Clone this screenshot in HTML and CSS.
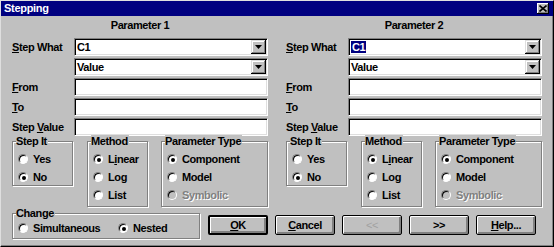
FILE: index.html
```html
<!DOCTYPE html>
<html>
<head>
<meta charset="utf-8">
<link rel="stylesheet" href="styles.css">
</head>
<body>
<div class="window">
  <div class="titlebar">
    <span class="title">Stepping</span>
    <span class="close"><svg width="8" height="7" viewBox="0 0 8 7"><path d="M0.5 0.5 L7.5 6.5 M7.5 0.5 L0.5 6.5" stroke="#000" stroke-width="1.6"/></svg></span>
  </div>
  <div class="content">
    <div class="columns">
      <div class="param">
        <div class="heading">Parameter 1</div>
        <div class="row"><span class="lbl"><u>S</u>tep What</span><div class="combo"><span class="combo-text">C1</span><span class="combo-btn"><svg width="7" height="4" viewBox="0 0 7 4"><path d="M0 0 H7 L3.5 4 Z" fill="#000"/></svg></span></div></div>
        <div class="row"><span class="lbl"></span><div class="combo"><span class="combo-text">Value</span><span class="combo-btn"><svg width="7" height="4" viewBox="0 0 7 4"><path d="M0 0 H7 L3.5 4 Z" fill="#000"/></svg></span></div></div>
        <div class="row"><span class="lbl"><u>F</u>rom</span><div class="edit"></div></div>
        <div class="row"><span class="lbl"><u>T</u>o</span><div class="edit"></div></div>
        <div class="row"><span class="lbl">Step <u>V</u>alue</span><div class="edit"></div></div>
        <div class="groups">
          <div class="group g-stepit"><span class="group-title">Step It</span>
            <div class="radio-row"><span class="radio"></span><span>Yes</span></div>
            <div class="radio-row"><span class="radio on"></span><span>No</span></div>
          </div>
          <div class="group g-method"><span class="group-title">Method</span>
            <div class="radio-row"><span class="radio on"></span><span>L<u>i</u>near</span></div>
            <div class="radio-row"><span class="radio"></span><span>Lo<u>g</u></span></div>
            <div class="radio-row"><span class="radio"></span><span>List</span></div>
          </div>
          <div class="group g-ptype"><span class="group-title">Parameter Type</span>
            <div class="radio-row"><span class="radio on"></span><span>Component</span></div>
            <div class="radio-row"><span class="radio"></span><span>Model</span></div>
            <div class="radio-row disabled"><span class="radio"></span><span>Symbolic</span></div>
          </div>
        </div>
      </div>
      <div class="param">
        <div class="heading">Parameter 2</div>
        <div class="row"><span class="lbl"><u>S</u>tep What</span><div class="combo"><span class="combo-text"><span class="sel">C1</span></span><span class="combo-btn"><svg width="7" height="4" viewBox="0 0 7 4"><path d="M0 0 H7 L3.5 4 Z" fill="#000"/></svg></span></div></div>
        <div class="row"><span class="lbl"></span><div class="combo"><span class="combo-text">Value</span><span class="combo-btn"><svg width="7" height="4" viewBox="0 0 7 4"><path d="M0 0 H7 L3.5 4 Z" fill="#000"/></svg></span></div></div>
        <div class="row"><span class="lbl"><u>F</u>rom</span><div class="edit"></div></div>
        <div class="row"><span class="lbl"><u>T</u>o</span><div class="edit"></div></div>
        <div class="row"><span class="lbl">Step <u>V</u>alue</span><div class="edit"></div></div>
        <div class="groups">
          <div class="group g-stepit"><span class="group-title">Step It</span>
            <div class="radio-row"><span class="radio"></span><span>Yes</span></div>
            <div class="radio-row"><span class="radio on"></span><span>No</span></div>
          </div>
          <div class="group g-method"><span class="group-title">Method</span>
            <div class="radio-row"><span class="radio on"></span><span>L<u>i</u>near</span></div>
            <div class="radio-row"><span class="radio"></span><span>Lo<u>g</u></span></div>
            <div class="radio-row"><span class="radio"></span><span>List</span></div>
          </div>
          <div class="group g-ptype"><span class="group-title">Parameter Type</span>
            <div class="radio-row"><span class="radio on"></span><span>Component</span></div>
            <div class="radio-row"><span class="radio"></span><span>Model</span></div>
            <div class="radio-row disabled"><span class="radio"></span><span>Symbolic</span></div>
          </div>
        </div>
      </div>
    </div>
    <div class="bottom">
      <div class="group g-change"><span class="group-title">Change</span>
        <div class="change-row">
          <div class="radio-row item-sim"><span class="radio"></span><span>Simultaneous</span></div>
          <div class="radio-row"><span class="radio on"></span><span>Nested</span></div>
        </div>
      </div>
      <div class="buttons">
        <button class="btn default"><u>O</u>K</button>
        <button class="btn"><u>C</u>ancel</button>
        <button class="btn disabled">&lt;&lt;</button>
        <button class="btn">&gt;&gt;</button>
        <button class="btn"><u>H</u>elp...</button>
      </div>
    </div>
  </div>
</div>
</body>
</html>
```
FILE: styles.css
```css
* { box-sizing: border-box; }
html, body { margin: 0; padding: 0; background: #c0c0c0; }
body {
  font-family: "Liberation Sans", Arial, sans-serif;
  font-weight: bold;
  font-size: 11px;
  letter-spacing: -0.4px;
  color: #000;
}
.window {
  width: 554px;
  height: 247px;
  background: #c0c0c0;
  border-top: 1px solid #dfdfdf;
  border-left: 1px solid #dfdfdf;
  border-right: 1px solid #000;
  border-bottom: 1px solid #000;
  box-shadow: inset -1px -1px 0 #808080;
  display: flex;
  flex-direction: column;
}
.titlebar {
  height: 15px;
  background: #000080;
  color: #fff;
  display: flex;
  align-items: center;
  justify-content: space-between;
  padding: 0 4px 0 3px;
}
.title { font-size: 11px; line-height: 15px; letter-spacing: -0.3px; }
.close {
  width: 12px;
  height: 11px;
  background: #c0c0c0;
  box-shadow: inset -1px -1px 0 #000, inset 1px 1px 0 #fff, inset -2px -2px 0 #808080;
  display: flex;
  align-items: center;
  justify-content: center;
  padding: 0 1px 1px 0;
}
.close svg { display: block; }
.content {
  padding: 0 0 0 11px;
}
.columns {
  display: flex;
  gap: 18px;
}
.param {
  width: 256px;
}
.heading {
  margin-top: 3px;
  height: 12px;
  line-height: 12px;
  text-align: center;
  margin-bottom: 7px;
}
.row {
  display: flex;
  height: 18px;
  margin-bottom: 2px;
  align-items: center;
}
.lbl {
  width: 62px;
  flex: none;
}
.edit, .combo {
  flex: 1;
  height: 18px;
  background: #fff;
  border-top: 1px solid #808080;
  border-left: 1px solid #808080;
  border-right: 1px solid #fff;
  border-bottom: 1px solid #fff;
  box-shadow: inset 1px 1px 0 #000, inset -1px -1px 0 #dfdfdf;
}
.combo {
  display: flex;
  align-items: stretch;
  padding: 1px 1px 1px 2px;
}
.combo-text {
  flex: 1;
  line-height: 14px;
}
.sel {
  background: #000080;
  color: #fff;
  padding: 0 1px;
}
.combo-btn {
  width: 15px;
  background: #c0c0c0;
  box-shadow: inset -1px -1px 0 #000, inset 1px 1px 0 #dfdfdf, inset -2px -2px 0 #808080, inset 2px 2px 0 #fff;
  display: flex;
  align-items: center;
  justify-content: center;
}
.combo-btn svg { display: block; }
.groups {
  margin-top: 5px;
  display: flex;
  align-items: flex-start;
}
.group {
  position: relative;
  border: 1px solid #808080;
  box-shadow: 1px 1px 0 #fff, inset 1px 1px 0 #fff;
  padding: 8px 0 0 5px;
}
.group-title {
  position: absolute;
  top: -7px;
  left: 3px;
  line-height: 12px;
  padding: 0 1px 0 0;
  background: #c0c0c0;
}
.g-stepit { width: 61px; height: 45px; }
.g-method { width: 61px; height: 66px; margin-left: 14px; }
.g-ptype { width: 107px; height: 66px; margin-left: 13px; }
.radio-row {
  height: 18px;
  display: flex;
  align-items: center;
  gap: 5px;
}
.radio {
  width: 10px;
  height: 10px;
  border-radius: 50%;
  background: #fff;
  border: 1px solid;
  border-color: #808080 #fff #fff #808080;
  box-shadow: inset 1px 1px 0 #000;
  display: flex;
  align-items: center;
  justify-content: center;
  flex: none;
}
.radio.on::after {
  content: "";
  width: 4px;
  height: 4px;
  border-radius: 50%;
  background: #000;
  margin: 1px 0 0 1px;
}
.radio-row.disabled {
  color: #808080;
  text-shadow: 1px 1px 0 #fff;
}
.radio-row.disabled .radio { background: #c0c0c0; }
.bottom {
  margin-top: 6px;
  display: flex;
  align-items: flex-start;
}
.g-change {
  width: 188px;
  height: 26px;
  padding-top: 5px;
}
.change-row { display: flex; }
.item-sim { width: 100px; }
.buttons {
  display: flex;
  gap: 7px;
  margin-left: 8px;
  margin-top: 2px;
}
.btn {
  font: inherit;
  letter-spacing: inherit;
  color: #000;
  width: 60px;
  height: 20px;
  padding: 0;
  background: #c0c0c0;
  border: 1px solid #000;
  border-radius: 2px;
  box-shadow: inset 1px 1px 0 #fff, inset -1px -1px 0 #808080, inset -2px -2px 0 #808080;
}
.btn.default { border-width: 2px; }
.btn.disabled { color: #a0a0a0; font-weight: normal; }
```
